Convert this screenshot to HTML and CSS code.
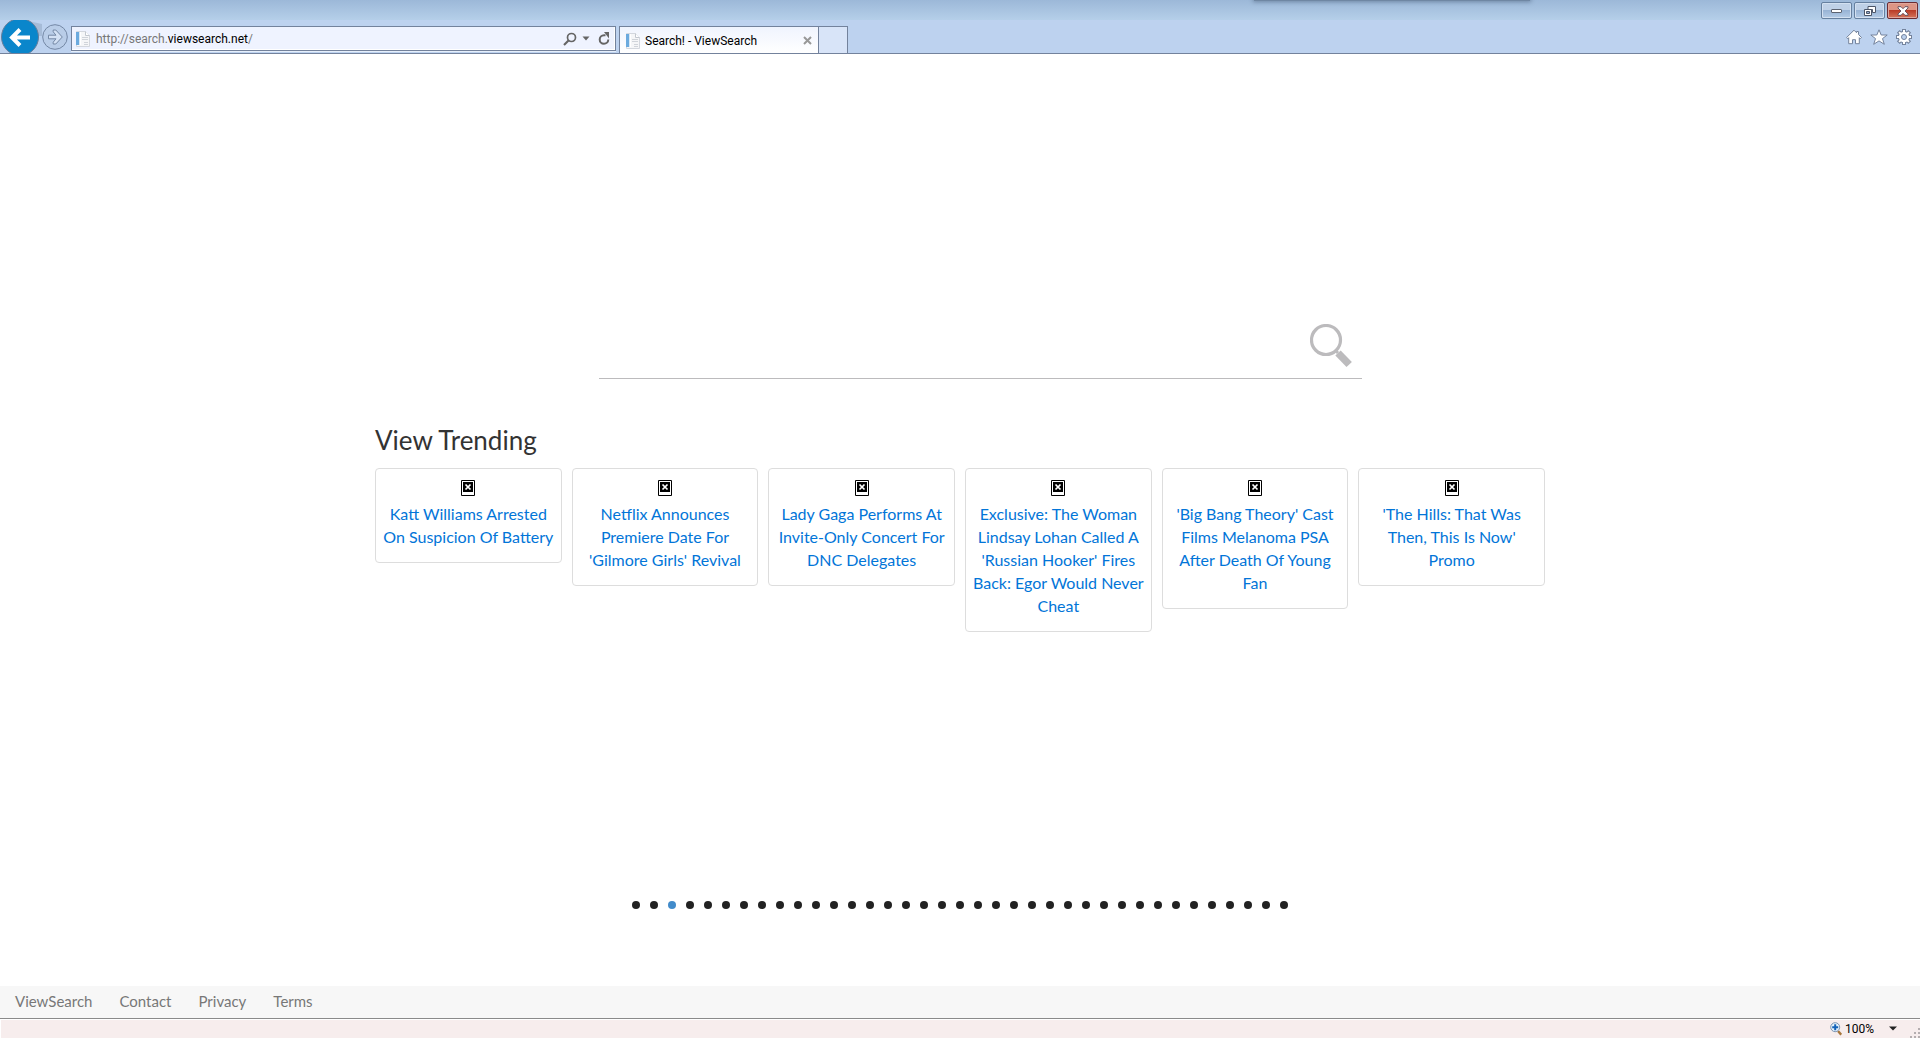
FILE: index.html
```html
<!DOCTYPE html>
<html lang="en">
<head>
<meta charset="utf-8">
<title>Search! - ViewSearch</title>
<link rel="stylesheet" href="styles.css">
</head>
<body>
<svg class="defs" aria-hidden="true">
  <symbol id="page" viewBox="0 0 16 16">
    <path d="M1.500.5h9l4 4v11h-13z" fill="#f5f6f8" stroke="#d3d7de"/>
    <path d="M1 1h3.500v13H1z" fill="#6baade"/><path d="M4.500 1h1.500v13h-1.500z" fill="#fff"/>
    <path d="M10.500.5v4h4" fill="#fff" stroke="#c3c8d0"/>
    <path d="M7 6.500h6M7 8.500h6M9 11.500h4M9 13.500h4" stroke="#d0d4da"/>
  </symbol>
  <symbol id="broken" viewBox="0 0 14 16">
    <path d="M.5.5h13v15H.5z" fill="#fff" stroke="#000"/>
    <path d="M2 2h10v10H2z" fill="#000"/>
    <path d="M4.500 4.500l5 5M9.500 4.500l-5 5" stroke="#fff" stroke-width="1.700"/>
  </symbol>
</svg>

<header class="browser">
  <div class="titlebar">
    <span class="shade"></span>
    <div class="window-buttons">
      <button class="win" aria-label="Minimize"><svg width="12" height="6" viewBox="0 0 12 6"><rect x=".5" y="1.500" width="10" height="3" rx=".5" fill="#fff" stroke="#5c6370"/></svg></button>
      <button class="win" aria-label="Restore"><svg width="12" height="12" viewBox="0 0 12 12" fill="none" stroke="#4c5668"><path d="M4 1.500h7.500v6H8.500v-3H4z" fill="#fff"/><path d="M.5 4.500h7v6h-7z" fill="#fff"/><path d="M2.500 6.500h3v2h-3z" fill="#8fabd0"/></svg></button>
      <button class="win close" aria-label="Close"><svg width="12" height="10" viewBox="0 0 12 10"><path d="M1 .7h3l2 2 2-2h3v1.300L8 5l3 3v1.300H8l-2-2-2 2H1V8l3-3-3-3z" fill="#fff" stroke="#5c4a58" stroke-width=".9"/></svg></button>
    </div>
  </div>
  <div class="navbar">
    <div class="nav-buttons">
      <button class="plain" aria-label="Back"><svg width="42" height="34" viewBox="0 0 42 34"><path d="M26 .8Q36 5 50 6V17H30z" fill="#a6bbd7"/><circle cx="20" cy="18" r="18.500" fill="#0a86cb" stroke="#667e9c"/><path d="M30 18.500H13M20 10.500L12 18.500l8 8" fill="none" stroke="#fff" stroke-width="4"/></svg></button>
      <button class="plain" aria-label="Forward"><svg width="26" height="26" viewBox="0 0 26 26"><circle cx="13" cy="13" r="12.300" fill="#b9cde8" stroke="#7488a5"/><path d="M6.500 11.200h7.500L11.200 7.800V6h2.600l6.500 7-6.500 7h-2.600v-1.800L14 14.800H6.500z" fill="#d3e1f4" stroke="#7488a5"/></svg></button>
    </div>
    <form class="address">
      <svg width="16" height="16"><use href="#page"/></svg>
      <label class="url"><span>http://search.</span><b>viewsearch.net</b><span>/</span></label>
      <button class="plain" type="button" aria-label="Search"><svg width="14" height="14" viewBox="0 0 14 14" fill="none" stroke="#656565"><circle cx="8.500" cy="5.500" r="4" stroke-width="1.700"/><path d="M5.500 8.500L1 13" stroke-width="2.200"/></svg></button>
      <button class="plain arrow" type="button" aria-label="Search options"><svg width="8" height="5" viewBox="0 0 8 5"><path d="M.5.5h7L4 4.500z" fill="#656565"/></svg></button>
      <button class="plain" type="button" aria-label="Refresh"><svg width="12" height="14" viewBox="0 0 12 14"><path d="M7.500 3.200H6A4.300 4.300 0 1 0 10.300 7.600" fill="none" stroke="#656565" stroke-width="2"/><path d="M6 0h5v6.500z" fill="#656565"/></svg></button>
    </form>
    <div class="tabs">
      <div class="tab">
        <svg width="16" height="16"><use href="#page"/></svg>
        <span>Search! - ViewSearch</span>
        <button class="plain" aria-label="Close tab"><svg width="9" height="9" viewBox="0 0 9 9"><path d="M1 1l7 7M8 1L1 8" stroke="#989898" stroke-width="2"/></svg></button>
      </div>
      <button class="new-tab" aria-label="New tab"></button>
    </div>
    <div class="tools">
      <button class="plain" aria-label="Home"><svg width="16" height="16" viewBox="0 0 16 16"><path d="M8 1.200l2.500 2.500V2.500h2v3l3 3-1.200 1.200-1-1v6H9.500v-4h-3v4H2.700v-6l-1 1L.6 8.500z" fill="#fff" stroke="#74839c"/></svg></button>
      <button class="plain" aria-label="Favorites"><svg width="18" height="16" viewBox="0 0 18 16"><path d="M9 .8l2.200 5.200h6l-4.700 3.600 1.800 5.700L9 11.900l-5.300 3.400 1.800-5.700L.8 6h6z" fill="#fff" stroke="#74839c"/></svg></button>
      <button class="plain" aria-label="Settings"><svg width="16" height="16" viewBox="0 0 16 16"><g stroke="#74839c" stroke-width="4"><path d="M8 0v16M0 8h16M2.300 2.300l11.400 11.400M13.700 2.300L2.300 13.700"/></g><circle cx="8" cy="8" r="6.200" fill="#74839c"/><g stroke="#fff" stroke-width="2"><path d="M8 1v14M1 8h14M3.100 3.100l9.800 9.800M12.900 3.100l-9.800 9.800"/></g><circle cx="8" cy="8" r="5.200" fill="#fff"/><circle cx="8" cy="8" r="2.500" fill="#bdd2ef" stroke="#74839c"/></svg></button>
    </div>
  </div>
</header>

<main class="content">
  <form class="search">
    <input type="text" aria-label="Search">
    <button class="plain" type="button" aria-label="Search"><svg width="42" height="44" viewBox="0 0 42 44"><circle cx="16" cy="16" r="14.500" fill="none" stroke="#bcbbbd" stroke-width="3.200"/><path d="M25.500 26.500l2.500 2.500" stroke="#bcbbbd" stroke-width="3"/><path d="M28 29L39.200 40.500" stroke="#bcbbbd" stroke-width="7.500"/></svg></button>
  </form>
  <section class="trending">
    <h1>View Trending</h1>
    <div class="cards">
      <a class="card" href="#"><svg width="14" height="16"><use href="#broken"/></svg><span>Katt Williams Arrested On Suspicion Of Battery</span></a>
      <a class="card" href="#"><svg width="14" height="16"><use href="#broken"/></svg><span>Netflix Announces Premiere Date For 'Gilmore Girls' Revival</span></a>
      <a class="card" href="#"><svg width="14" height="16"><use href="#broken"/></svg><span>Lady Gaga Performs At Invite-Only Concert For DNC Delegates</span></a>
      <a class="card" href="#"><svg width="14" height="16"><use href="#broken"/></svg><span>Exclusive: The Woman Lindsay Lohan Called A 'Russian Hooker' Fires Back: Egor Would Never Cheat</span></a>
      <a class="card" href="#"><svg width="14" height="16"><use href="#broken"/></svg><span>'Big Bang Theory' Cast Films Melanoma PSA After Death Of Young Fan</span></a>
      <a class="card" href="#"><svg width="14" height="16"><use href="#broken"/></svg><span>'The Hills: That Was Then, This Is Now' Promo</span></a>
    </div>
    <div class="dots">
      <button aria-label="1"></button><button aria-label="2"></button><button class="current" aria-label="3"></button><button aria-label="4"></button><button aria-label="5"></button><button aria-label="6"></button><button aria-label="7"></button><button aria-label="8"></button><button aria-label="9"></button><button aria-label="10"></button><button aria-label="11"></button><button aria-label="12"></button><button aria-label="13"></button><button aria-label="14"></button><button aria-label="15"></button><button aria-label="16"></button><button aria-label="17"></button><button aria-label="18"></button><button aria-label="19"></button><button aria-label="20"></button><button aria-label="21"></button><button aria-label="22"></button><button aria-label="23"></button><button aria-label="24"></button><button aria-label="25"></button><button aria-label="26"></button><button aria-label="27"></button><button aria-label="28"></button><button aria-label="29"></button><button aria-label="30"></button><button aria-label="31"></button><button aria-label="32"></button><button aria-label="33"></button><button aria-label="34"></button><button aria-label="35"></button><button aria-label="36"></button><button aria-label="37"></button>
    </div>
  </section>
</main>

<footer class="footer">
  <a href="#">ViewSearch</a><a href="#">Contact</a><a href="#">Privacy</a><a href="#">Terms</a>
</footer>

<div class="status">
  <button class="plain zoom"><svg width="12" height="14" viewBox="0 0 12 14"><path d="M8 9l3.200 3.700" stroke="#a8763c" stroke-width="2.400"/><circle cx="5.200" cy="5.200" r="4.500" fill="#e4f2fd" stroke="#7c93b0"/><path d="M5.200 2.200v6M2.200 5.200h6" stroke="#1462b8" stroke-width="2"/></svg>100%</button>
  <button class="plain" aria-label="Zoom level"><svg width="8" height="5" viewBox="0 0 8 5"><path d="M0 .5h8L4 4.500z" fill="#222"/></svg></button>
  <svg class="grip" width="10" height="10" viewBox="0 0 10 10" fill="#b5aeb0"><path d="M8 0h2v2H8zM4 4h2v2H4zM8 4h2v2H8zM0 8h2v2H0zM4 8h2v2H4zM8 8h2v2H8z"/></svg>
</div>
</body>
</html>
```
FILE: styles.css
```css
* { box-sizing: border-box; }

body {
  margin: 0;
  min-height: 100vh;
  display: flex;
  flex-direction: column;
  background: #fff;
  font-family: Lato, sans-serif;
  font-size: 16px;
  line-height: 23px;
  color: #333;
}

.defs { display: none; }
svg { display: block; flex: none; }
a { text-decoration: none; }

.plain {
  padding: 0;
  border: 0;
  background: none;
  font: inherit;
  color: inherit;
}

/* Browser frame */
.browser {
  display: flex;
  flex-direction: column;
  background: #bdd2ef;
  border-bottom: 1px solid #73829c;
  font-family: Roboto, sans-serif;
  font-size: 12px;
  line-height: 16px;
  color: #000;
}

.titlebar {
  position: relative;
  height: 20px;
  display: flex;
  justify-content: flex-end;
  padding-right: 2px;
  background: linear-gradient(#9cb8d8, #b5cfe9);
  overflow: hidden;
}

.shade {
  position: absolute;
  top: -4px;
  right: 390px;
  width: 276px;
  height: 5px;
  background: #6f87a3;
  box-shadow: 0 0 4px 1px #6f87a3;
}

.window-buttons { display: flex; gap: 2px; }

.win {
  width: 31px;
  height: 17px;
  margin-top: 2px;
  padding: 0;
  display: flex;
  align-items: center;
  justify-content: center;
  border: 1px solid #66809f;
  border-radius: 2px;
  box-shadow: inset 0 0 0 1px #d3e1f1;
  background: linear-gradient(#bfd1e7 45%, #98b4d5 50%, #b4cce6);
}

.close {
  border-color: #6b2c33;
  box-shadow: inset 0 0 0 1px #e0a79c;
  background: linear-gradient(#dd9585 45%, #b93d28 50%, #d5765c);
}

.navbar { height: 33px; display: flex; }

.nav-buttons {
  width: 71px;
  display: flex;
  align-items: center;
  margin-top: -1px;
}

.nav-buttons .plain + .plain { margin-top: 2px; }

.address {
  width: 545px;
  height: 25px;
  margin-top: 6px;
  padding: 0 5px 0 3px;
  display: flex;
  align-items: center;
  gap: 5px;
  background: #eff3ff;
  border: 1px solid #73829c;
  box-shadow: inset -1px -1px #fff, 0 1px #e6effb;
}

.url { flex: 1; color: #777; }
.url b { font-weight: 400; color: #000; }
.arrow { margin-right: 3px; }

.tabs {
  display: flex;
  margin: 6px auto 0 3px;
}

.tab {
  width: 200px;
  padding: 1px 6px 0 5px;
  display: flex;
  align-items: center;
  gap: 4px;
  border: 1px solid #73829c;
  border-bottom: 0;
  background: linear-gradient(#f0f4fe, #fff);
}

.tab span { flex: 1; }

.new-tab {
  width: 29px;
  padding: 0;
  border: 1px solid #73829c;
  border-width: 1px 1px 0 0;
  background: #d8e4f8;
}

.tools {
  display: flex;
  align-items: center;
  gap: 8px;
  padding: 1px 8px 0 0;
}

/* Page */
.content {
  flex: 1;
  width: 1170px;
  max-width: 100%;
  margin: 0 auto;
  padding-top: 260px;
}

.search {
  display: flex;
  align-items: flex-end;
  margin: 0 183px 0 224px;
  padding-right: 10px;
  border-bottom: 1px solid #bcbbbd;
}

.search input {
  flex: 1;
  min-width: 0;
  height: 64px;
  padding: 0;
  border: 0;
  outline: 0;
  font: inherit;
  font-size: 24px;
}

.search button { margin-bottom: 10px; }

h1 {
  margin: 45px 0 12px;
  font-size: 26px;
  font-weight: 400;
  line-height: 32px;
}

.cards {
  min-height: 425px;
  display: grid;
  grid-template-columns: repeat(6, 1fr);
  gap: 10px;
  align-items: start;
}

.card {
  padding: 11px 5px 14px;
  display: flex;
  flex-direction: column;
  align-items: center;
  gap: 6px;
  border: 1px solid #ddd;
  border-radius: 4px;
  text-align: center;
  color: #0275d8;
}

.dots {
  display: flex;
  justify-content: center;
  gap: 10px;
  padding: 8px 0 16px;
}

.dots button {
  width: 8px;
  height: 8px;
  padding: 0;
  border: 0;
  border-radius: 50%;
  background: #222;
}

.dots .current { background: #428bca; }

.footer {
  display: flex;
  gap: 27px;
  padding: 4px 15px 5px;
  background: #f7f7f7;
  font-size: 15px;
}

.footer a { color: #777; }

.status {
  height: 20px;
  display: flex;
  align-items: center;
  justify-content: flex-end;
  background: #f7eded;
  border-top: 1px solid #8a8a8a;
  box-shadow: inset 1px 1px #fff;
  font-family: Roboto, sans-serif;
  font-size: 12px;
  line-height: 16px;
  color: #000;
}

.zoom { display: flex; align-items: center; gap: 3px; margin-right: 15px; }
.grip { margin: 8px 0 0 13px; }
```
